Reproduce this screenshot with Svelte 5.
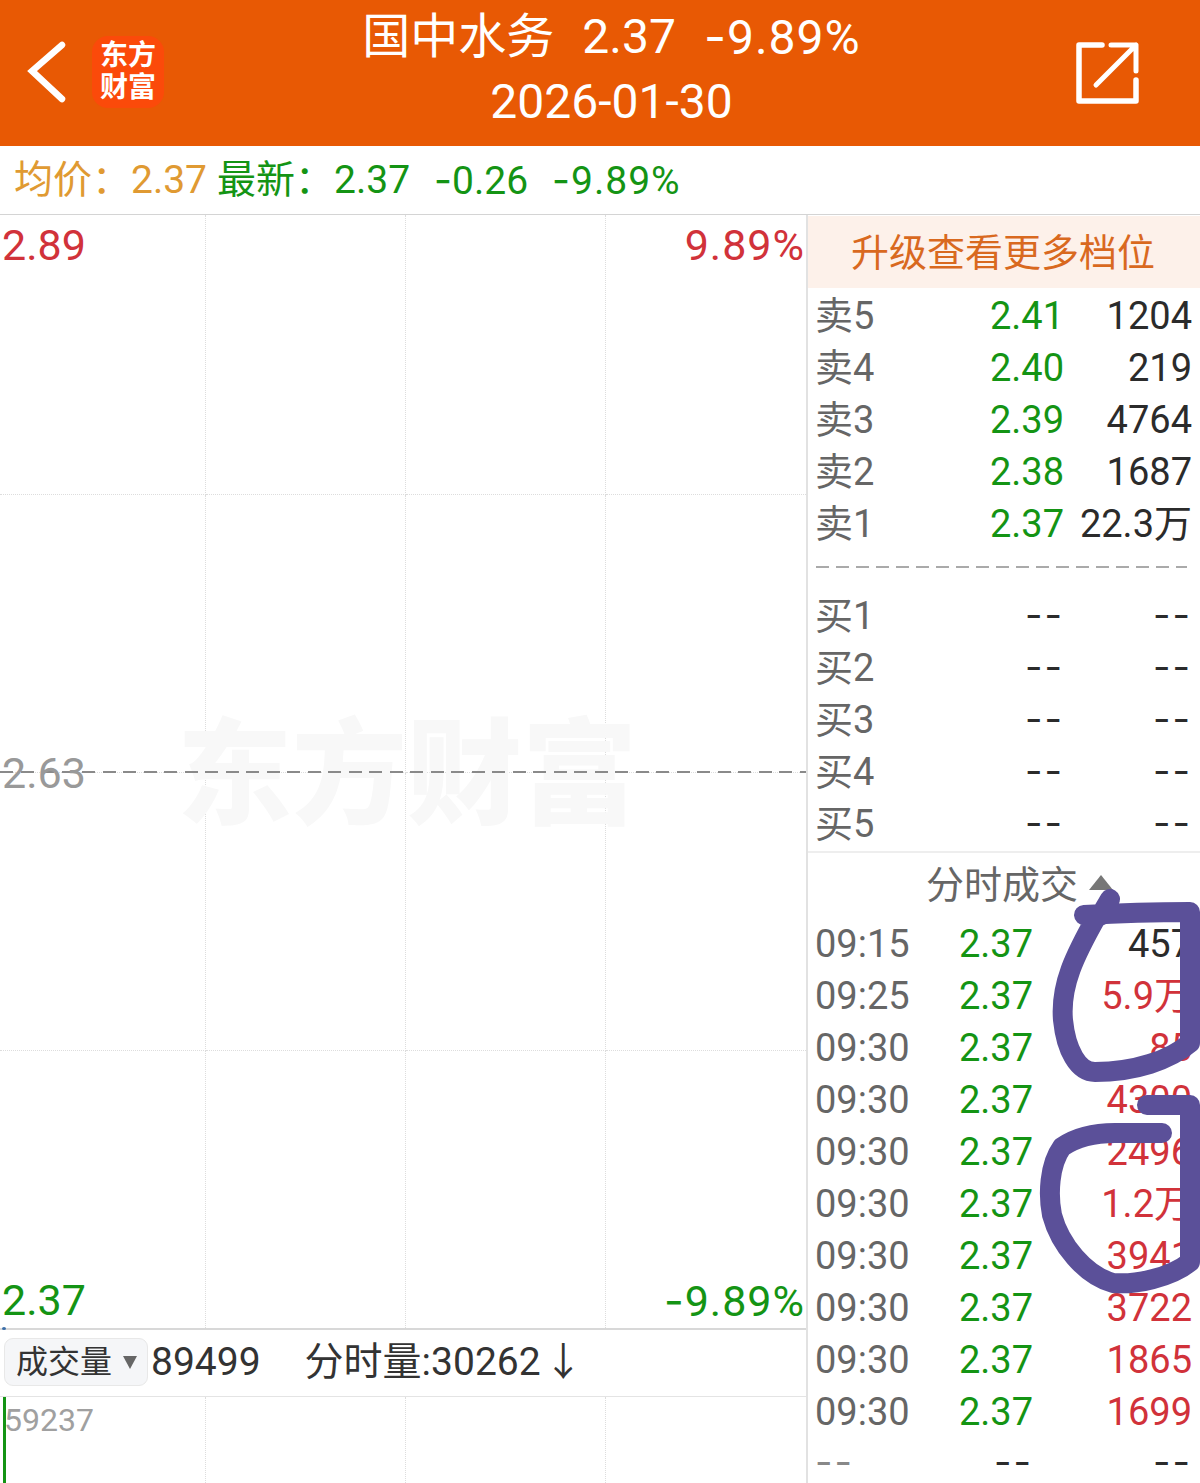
<script>
	const asks = [
		['卖5', '2.41', '1204'],
		['卖4', '2.40', '219'],
		['卖3', '2.39', '4764'],
		['卖2', '2.38', '1687'],
		['卖1', '2.37', '22.3万']
	];
	const bids = ['买1', '买2', '买3', '买4', '买5'];
	const ticks = [
		['09:15', '457', 'dark'],
		['09:25', '5.9万', 'red'],
		['09:30', '85', 'red'],
		['09:30', '4300', 'red'],
		['09:30', '2496', 'red'],
		['09:30', '1.2万', 'red'],
		['09:30', '3941', 'red'],
		['09:30', '3722', 'red'],
		['09:30', '1865', 'red'],
		['09:30', '1699', 'red']
	];
</script>

<div class="page">
	<header class="top">
		<svg class="back" width="44" height="68" viewBox="0 0 44 68" aria-hidden="true">
			<path d="M36 6 L6 32 L36 60" fill="none" stroke="#fff" stroke-width="6.5" stroke-linecap="round" stroke-linejoin="miter" />
		</svg>
		<div class="logo">东方<br />财富</div>
		<div class="title">
			<div class="name">
				<span>国中水务</span>
				<span>2.37</span>
				<span class="pct"><span class="hy">-</span>9.89%</span>
			</div>
			<div class="date">2026-01-30</div>
		</div>
		<svg class="share" width="66" height="66" viewBox="0 0 66 66" aria-hidden="true">
			<path d="M27 5 H4 V61 H61 V40" fill="none" stroke="#fff" stroke-width="5.5" stroke-linejoin="round" stroke-linecap="round" />
			<path d="M36 5 H61 V31 M61 5 L21 45" fill="none" stroke="#fff" stroke-width="5" stroke-linecap="round" stroke-linejoin="round" />
		</svg>
	</header>

	<div class="quote">
		<span class="amber">均价&#xFF1A;2.37</span>
		<span class="green latest">最新&#xFF1A;2.37</span>
		<span class="green chg"><span class="hy">-</span>0.26</span>
		<span class="green chg pct"><span class="hy">-</span>9.89%</span>
	</div>

	<main class="body">
		<section class="left">
			<div class="chart">
				<div class="grid">
					{#each Array(16) as _, i (i)}
						<div class="cell"></div>
					{/each}
				</div>
				<div class="watermark">东方财富</div>
				<div class="mid-line"></div>
				<span class="lab tl red">2.89</span>
				<span class="lab tr red pct">9.89%</span>
				<span class="lab ml gray">2.63</span>
				<span class="lab bl green">2.37</span>
				<span class="lab br green pct"><span class="hy">-</span>9.89%</span>
				<i class="dot"></i>
			</div>
			<div class="vol-bar">
				<div class="select">成交量<i class="caret"></i></div>
				<span class="vol-total">89499</span>
				<span class="vol-now">分时量:30262<span class="arrow">↓</span></span>
			</div>
			<div class="vol-chart">
				<div class="vol-grid">
					{#each Array(4) as _, i (i)}
						<div class="vcell"></div>
					{/each}
				</div>
				<i class="vol-tick"></i>
				<span class="vol-max">59237</span>
			</div>
		</section>

		<aside class="right">
			<div class="upgrade">升级查看更多档位</div>
			<div class="book asks">
				{#each asks as [k, p, v] (k)}
					<div class="row">
						<span class="key">{k}</span>
						<span class="price green">{p}</span>
						<span class="qty dark">{v}</span>
					</div>
				{/each}
			</div>
			<div class="split"></div>
			<div class="book">
				{#each bids as k (k)}
					<div class="row">
						<span class="key">{k}</span>
						<span class="price dash dark">--</span>
						<span class="qty dash dark">--</span>
					</div>
				{/each}
			</div>
			<div class="tick-head">分时成交<i class="up"></i></div>
			<div class="ticks">
				{#each ticks as [t, v, c], i (i)}
					<div class="tick">
						<span class="time">{t}</span>
						<span class="tprice green">2.37</span>
						<span class="qty {c}">{v}</span>
					</div>
				{/each}
				<div class="tick last">
					<span class="time dash">--</span>
					<span class="tprice dash dark">--</span>
					<span class="qty dash dark">--</span>
				</div>
			</div>
		</aside>
	</main>

	<!-- hand-drawn marker circles on top of the screenshot -->
	<svg class="marker" width="1200" height="1483" viewBox="0 0 1200 1483" aria-hidden="true">
		<path d="M1110 899 L1100 916 M1084 915 C1120 913 1160 912 1190 912 V1043 C1170 1060 1135 1072 1095 1072 C1078 1072 1066 1050 1063 1020 C1060 985 1075 955 1097 916" />
		<path d="M1147 1105 H1190 V1262 C1170 1278 1135 1285 1113 1283 C1085 1275 1060 1245 1052 1215 C1048 1195 1049 1165 1062 1147 C1078 1136 1095 1133 1115 1133 H1162" />
	</svg>
</div>

<style>
	:global(body) {
		margin: 0;
		background: #fff;
	}
	.page {
		position: relative;
		width: 1200px;
		height: 1483px;
		overflow: hidden;
		font-family: Roboto, "Noto Sans CJK SC", sans-serif;
		color: #333;
	}
	.red { color: #d1323a; }
	.green { color: #149414; }
	.amber { color: #e09a32; }
	.gray { color: #999; }
	.dark { color: #2b2b2b; }
	.hy { font-family: Inter, sans-serif; }
	.pct { letter-spacing: 1px; }

	/* header */
	.top {
		position: relative;
		height: 146px;
		background: #e85904;
		display: flex;
		align-items: center;
		color: #fff;
	}
	.back {
		margin: 0 0 0 26px;
		flex: none;
	}
	.logo {
		width: 72px;
		height: 72px;
		margin: -2px 0 0 22px;
		border-radius: 16px;
		background: #fb4a0a;
		color: #fff;
		font-size: 28px;
		font-weight: 700;
		line-height: 32px;
		text-align: center;
		padding-top: 4px;
		box-sizing: border-box;
		flex: none;
	}
	.title {
		flex: 1;
		text-align: center;
		padding-right: 16px;
		margin-bottom: 8px;
		font-size: 48px;
		line-height: 64px;
	}
	.name {
		display: flex;
		justify-content: center;
		gap: 28px;
		white-space: nowrap;
	}
	.share {
		flex: none;
		margin-right: 59px;
	}

	/* quote line */
	.quote {
		height: 68px;
		display: flex;
		align-items: center;
		padding-left: 14px;
		border-bottom: 1px solid #d4d4d4;
		font-size: 39px;
		line-height: 60px;
		white-space: nowrap;
	}
	.latest { margin-left: 10px; }
	.chg { margin-left: 24px; }

	.body {
		display: flex;
		height: 1268px;
	}

	/* left column */
	.left {
		width: 806px;
		flex: none;
		display: flex;
		flex-direction: column;
	}
	.chart {
		position: relative;
		height: 1113px;
		border-bottom: 2px solid #d8d8d8;
	}
	.grid {
		position: absolute;
		inset: 0;
		display: grid;
		grid-template-columns: 206px 200px 200px 200px;
		grid-template-rows: 280px 278px 278px 277px;
	}
	.cell {
		border-right: 1px dotted #ddd;
		border-bottom: 1px dotted #ddd;
	}
	.cell:nth-child(4n) { border-right: none; }
	.cell:nth-last-child(-n + 4) { border-bottom: none; }
	.watermark {
		position: absolute;
		left: 177px;
		top: 486px;
		font-size: 115px;
		line-height: 150px;
		font-weight: 900;
		color: #f8f8f8;
		white-space: nowrap;
	}
	.mid-line {
		position: absolute;
		left: 0;
		right: 0;
		top: 556px;
		height: 2px;
		background: repeating-linear-gradient(90deg, #8a8a8a 0 13px, transparent 13px 20.5px);
	}
	.lab {
		position: absolute;
		font-size: 43px;
		line-height: 50px;
	}
	.tl { left: 2px; top: 5px; }
	.tr { right: 1px; top: 5px; }
	.ml { left: 2px; top: 533px; }
	.bl { left: 2px; top: 1060px; }
	.br { right: 1px; top: 1060px; }
	.dot {
		position: absolute;
		left: 2px;
		bottom: -2px;
		width: 4px;
		height: 3px;
		border-radius: 50%;
		background: #3b6ea8;
	}
	.vol-bar {
		height: 67px;
		display: flex;
		align-items: center;
		font-size: 39px;
		line-height: 48px;
		padding-bottom: 2px;
		box-sizing: border-box;
		border-bottom: 1px solid #e4e4e4;
		color: #333;
		white-space: nowrap;
	}
	.select {
		width: 144px;
		height: 48px;
		margin-left: 4px;
		box-sizing: border-box;
		display: flex;
		align-items: center;
		padding-left: 11px;
		border: 1px solid #e8e8e8;
		border-radius: 9px;
		background: #f5f6f8;
		font-size: 32px;
		line-height: 44px;
	}
	.caret {
		margin-left: 11px;
		border-left: 7px solid transparent;
		border-right: 7px solid transparent;
		border-top: 13px solid #666;
	}
	.vol-total { margin-left: 3px; }
	.vol-now { margin-left: 44px; }
	.arrow { margin-left: 3px; }
	.vol-chart {
		position: relative;
		flex: 1;
	}
	.vol-grid {
		position: absolute;
		inset: 0;
		display: grid;
		grid-template-columns: 206px 200px 200px 200px;
	}
	.vcell { border-right: 1px dotted #ddd; }
	.vcell:last-child { border-right: none; }
	.vol-tick {
		position: absolute;
		left: 3px;
		top: 0;
		bottom: 0;
		width: 3px;
		background: #149414;
	}
	.vol-max {
		position: absolute;
		left: 4px;
		top: 3px;
		font-size: 32px;
		line-height: 40px;
		color: #a0a0a0;
	}

	/* right column */
	.right {
		flex: 1;
		border-left: 2px solid #e2e2e2;
		font-size: 38px;
		min-width: 0;
	}
	.upgrade {
		height: 72px;
		margin-top: 1px;
		background: #fdf1ea;
		color: #d9691f;
		font-size: 38px;
		line-height: 74px;
		text-align: center;
		padding-right: 2px;
	}
	.row,
	.tick {
		display: grid;
		height: 52px;
		line-height: 52px;
		padding: 0 8px 0 7px;
		white-space: nowrap;
	}
	.row { grid-template-columns: 90px 159px 1fr; }
	.tick { grid-template-columns: 120px 98px 1fr; }
	.asks { padding-top: 2px; }
	.key,
	.time { color: #666; }
	.price,
	.tprice,
	.qty { text-align: right; }
	.dash {
		font-family: Inter, sans-serif;
		letter-spacing: 2px;
		line-height: 48px;
	}
	.time.dash { color: #888; }
	.tick.last {
		height: 46px;
		line-height: 46px;
	}
	.tick.last .dash { line-height: 46px; }
	.split {
		height: 2px;
		margin: 16px 13px 22px 8px;
		background: repeating-linear-gradient(90deg, #aaa 0 13px, transparent 13px 20px);
	}
	.tick-head {
		border-top: 2px solid #eee;
		margin-top: 1px;
		height: 65px;
		line-height: 65px;
		padding-left: 118px;
		color: #666;
		display: flex;
		align-items: center;
	}
	.up {
		margin-left: 11px;
		margin-top: -6px;
		border-left: 12px solid transparent;
		border-right: 12px solid transparent;
		border-bottom: 15px solid #777;
	}

	.marker {
		position: absolute;
		left: 0;
		top: 0;
		pointer-events: none;
	}
	.marker path {
		fill: none;
		stroke: #5b5099;
		stroke-width: 20;
		stroke-linecap: round;
		stroke-linejoin: round;
	}
</style>
